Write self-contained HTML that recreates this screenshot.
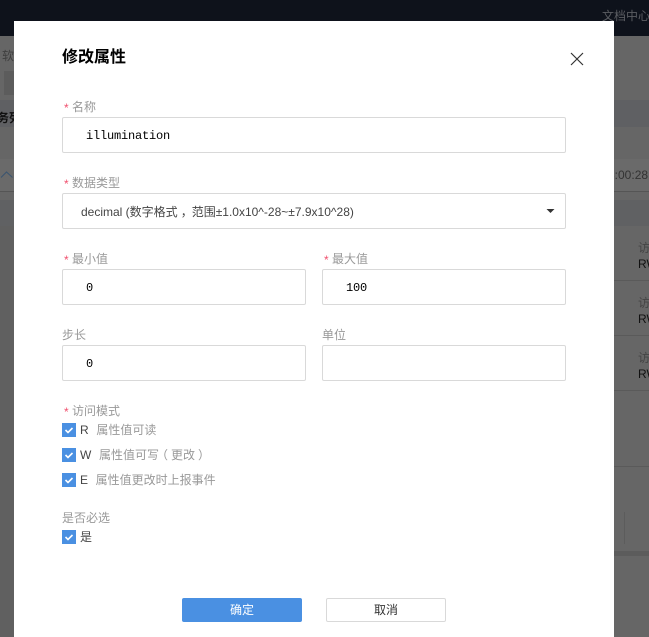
<!DOCTYPE html>
<html lang="zh">
<head>
<meta charset="utf-8">
<style>
html,body{margin:0;padding:0;width:649px;height:637px;overflow:hidden;background:#666;}
body{position:relative;font-family:"Liberation Sans","Noto Sans CJK SC",sans-serif;font-size:12px;}
.a{position:absolute;white-space:nowrap;}
.band{position:absolute;left:0;width:649px;}
.modal{position:absolute;left:14px;top:21px;width:600px;height:616px;background:#fff;}
.input{position:absolute;box-sizing:border-box;background:#fff;border:1px solid #d9d9d9;border-radius:2px;height:36px;}
.lab{position:absolute;white-space:nowrap;font-size:12px;line-height:16px;color:#999;}
.star{position:absolute;white-space:nowrap;font-size:12px;line-height:16px;color:#f0506e;}
.val{position:absolute;white-space:nowrap;font-family:"Liberation Mono",monospace;font-size:12px;letter-spacing:-.2px;line-height:16px;color:#000;}
.cb{position:absolute;left:62px;width:14px;height:14px;background:#4a90e2;}
.cb svg{display:block;}
.opt{position:absolute;white-space:nowrap;font-size:12px;line-height:16px;color:#999;}
.opt b{font-weight:normal;color:#444;margin-right:1px;}
.bg{position:absolute;white-space:nowrap;color:#333;font-size:12px;line-height:16px;}
.s{position:relative;}
</style>
</head>
<body>
<div class="band" style="top:0;height:36px;background:#0e121b;"></div>
<div class="band" style="top:100px;height:27px;background:#5f6063;"></div>
<div class="band" style="top:159px;height:32px;background:#6a6a6a;"></div>
<div class="band" style="top:191px;height:1px;background:#555;"></div>
<div class="band" style="top:200px;height:26px;background:#606163;"></div>
<div class="a" style="left:614px;width:35px;top:280px;height:1px;background:#5a5a5a;"></div>
<div class="a" style="left:614px;width:35px;top:335px;height:1px;background:#5a5a5a;"></div>
<div class="a" style="left:614px;width:35px;top:390px;height:1px;background:#5a5a5a;"></div>
<div class="a" style="left:614px;width:35px;top:466px;height:1px;background:#5a5a5a;"></div>
<div class="a" style="left:614px;width:35px;top:551px;height:5px;background:#5c5c5c;"></div>
<div class="a" style="left:0;width:14px;top:226px;height:411px;background:#606060;"></div>
<div class="a" style="left:624px;top:512px;width:1px;height:32px;background:#5c5c5c;"></div>
<div class="a" style="left:4px;top:71px;width:12px;height:24px;background:#5c5c5c;"></div>

<div class="bg" style="left:602px;top:8px;color:#5b5d62;">文档中心</div>
<div class="bg" style="left:2px;top:48px;color:#3f3f3f;">软</div>
<div class="bg" style="left:-3px;top:110px;color:#111;font-weight:bold;">务列</div>
<svg class="a" style="left:0;top:170px;" width="14" height="10" viewBox="0 0 14 10"><path d="M1 7.5L6.5 2L12.5 7.5" fill="none" stroke="#3a5570" stroke-width="1"/></svg>
<div class="bg" style="left:608px;top:167px;color:#333;">8:00:28</div>
<div class="bg" style="left:638px;top:240px;color:#444;">访</div>
<div class="bg" style="left:638px;top:256px;color:#111;">RW</div>
<div class="bg" style="left:638px;top:295px;color:#444;">访</div>
<div class="bg" style="left:638px;top:311px;color:#111;">RW</div>
<div class="bg" style="left:638px;top:350px;color:#444;">访</div>
<div class="bg" style="left:638px;top:366px;color:#111;">RW</div>

<div class="modal"></div>

<div class="a" style="left:62px;top:47px;font-size:16px;line-height:22px;font-weight:bold;color:#000;">修改属性</div>
<svg class="a" style="left:570px;top:52px;" width="14" height="14" viewBox="0 0 14 14"><path d="M1 1L13 13M13 1L1 13" fill="none" stroke="#333" stroke-width="1.2"/></svg>

<div class="star" style="left:64px;top:100px;">*</div>
<div class="lab" style="left:72px;top:99px;">名称</div>
<div class="input" style="left:62px;top:117px;width:504px;"></div>
<div class="val" style="left:86px;top:128px;">illumination</div>

<div class="star" style="left:64px;top:176px;">*</div>
<div class="lab" style="left:72px;top:175px;">数据类型</div>
<div class="input" style="left:62px;top:193px;width:504px;"></div>
<div class="a" style="left:81px;top:204px;font-size:12px;line-height:16px;color:#444;">decimal (数字格式<span style="display:inline-block;width:14px;position:relative;left:3px;">，</span>范围±1.0x10^-28~±7.9x10^28)</div>
<svg class="a" style="left:546px;top:208px;" width="9" height="6" viewBox="0 0 9 6"><path d="M0.5 1H8.5L4.5 5Z" fill="#333"/></svg>

<div class="star" style="left:64px;top:252px;">*</div>
<div class="lab" style="left:72px;top:251px;">最小值</div>
<div class="input" style="left:62px;top:269px;width:244px;"></div>
<div class="val" style="left:86px;top:280px;">0</div>
<div class="star" style="left:324px;top:252px;">*</div>
<div class="lab" style="left:332px;top:251px;">最大值</div>
<div class="input" style="left:322px;top:269px;width:244px;"></div>
<div class="val" style="left:346px;top:280px;">100</div>

<div class="lab" style="left:62px;top:327px;">步长</div>
<div class="input" style="left:62px;top:345px;width:244px;"></div>
<div class="val" style="left:86px;top:356px;">0</div>
<div class="lab" style="left:322px;top:327px;">单位</div>
<div class="input" style="left:322px;top:345px;width:244px;"></div>

<div class="star" style="left:64px;top:404px;">*</div>
<div class="lab" style="left:72px;top:403px;">访问模式</div>

<div class="cb" style="top:423px;"><svg width="14" height="14" viewBox="0 0 14 14"><path d="M3.5 7L6 9.5L10.5 5" fill="none" stroke="#fff" stroke-width="1.6"/></svg></div>
<div class="opt" style="left:80px;top:422px;"><b>R</b>&nbsp; 属性值可读</div>
<div class="cb" style="top:448px;"><svg width="14" height="14" viewBox="0 0 14 14"><path d="M3.5 7L6 9.5L10.5 5" fill="none" stroke="#fff" stroke-width="1.6"/></svg></div>
<div class="opt" style="left:80px;top:447px;"><b>W</b>&nbsp; 属性值可写<span class="s" style="left:-3px;">（</span>更改<span class="s" style="left:3px;">）</span></div>
<div class="cb" style="top:473px;"><svg width="14" height="14" viewBox="0 0 14 14"><path d="M3.5 7L6 9.5L10.5 5" fill="none" stroke="#fff" stroke-width="1.6"/></svg></div>
<div class="opt" style="left:80px;top:472px;"><b>E</b>&nbsp; 属性值更改时上报事件</div>

<div class="lab" style="left:62px;top:510px;">是否必选</div>
<div class="cb" style="top:530px;"><svg width="14" height="14" viewBox="0 0 14 14"><path d="M3.5 7L6 9.5L10.5 5" fill="none" stroke="#fff" stroke-width="1.6"/></svg></div>
<div class="opt" style="left:80px;top:529px;"><b>是</b></div>

<div class="a" style="left:182px;top:598px;width:120px;height:24px;background:#4a90e2;border-radius:2px;color:#fff;text-align:center;line-height:25px;font-size:12px;">确定</div>
<div class="a" style="left:326px;top:598px;width:120px;height:24px;box-sizing:border-box;background:#fff;border:1px solid #d9d9d9;border-radius:2px;color:#333;text-align:center;line-height:23px;font-size:12px;">取消</div>
</body>
</html>
